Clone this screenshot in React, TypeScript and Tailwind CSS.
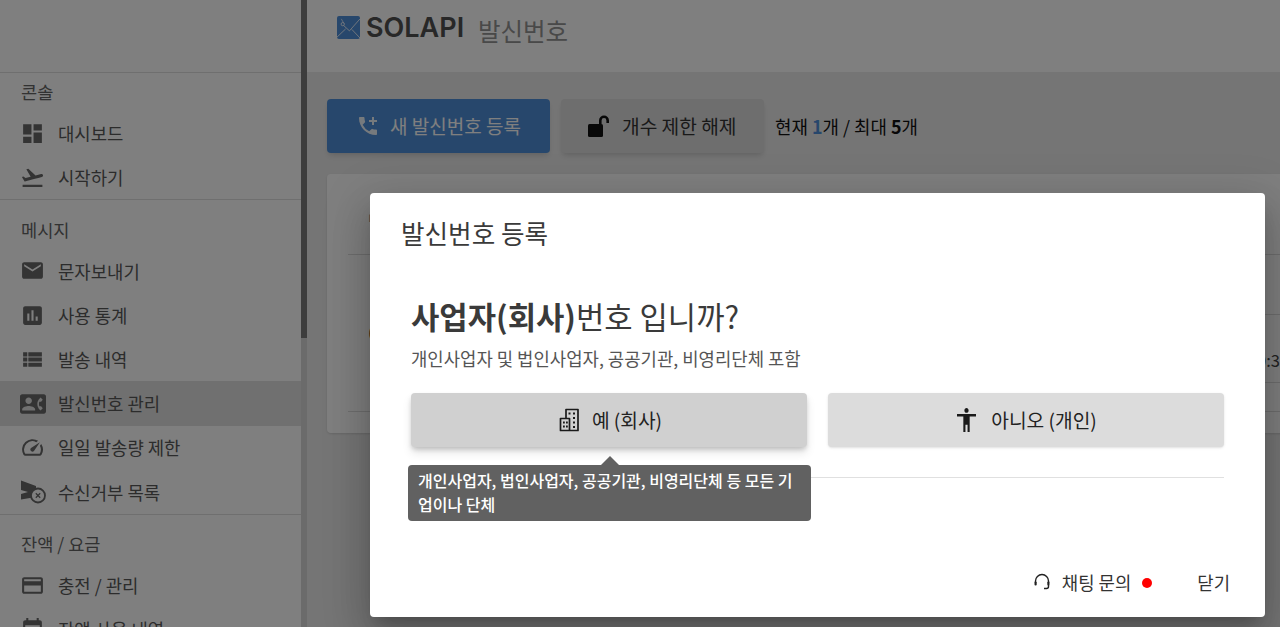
import React from "react";
import {
  MdDashboard,
  MdFlightTakeoff,
  MdEmail,
  MdAssessment,
  MdViewList,
  MdContactPhone,
  MdSpeed,
  MdOutlineCreditCard,
  MdEvent,
  MdAddIcCall,
} from "react-icons/md";

function BlockedIcon() {
  return (
    <svg viewBox="0 0 26 24" className="w-[26px] h-[24px]" fill="currentColor">
      <path d="M1 .5 16 6v11L1 19.500V14l7-2-7-2Z" />
      <circle cx="18" cy="15.500" r="7" fill="#fff" stroke="currentColor" strokeWidth="1.800" />
      <path d="m15.800 13.300 4.400 4.400m0-4.400-4.400 4.400" fill="none" stroke="currentColor" strokeWidth="1.300" />
    </svg>
  );
}

function Item({ icon, label, active }: { icon: React.ReactNode; label: string; active?: boolean }) {
  return (
    <div className={`flex items-center h-[44.2px] ${active ? "bg-[#e0e0e0]" : ""}`}>
      <div className="w-[58px] pl-[20px] flex items-center text-[#686868]">{icon}</div>
      <span className="text-[17.8px] text-[#585858]">{label}</span>
    </div>
  );
}

function Section({ label, first, children }: { label: string; first?: boolean; children: React.ReactNode }) {
  return (
    <div className={`border-b border-[#dedede] ${first ? "" : "pt-[10.5px]"}`}>
      <div className="h-[38px] pl-[21px] flex items-center text-[17.6px] text-[#656565]">{label}</div>
      {children}
    </div>
  );
}

function Sidebar() {
  return (
    <aside className="w-[307px] h-full flex shrink-0 bg-white overflow-hidden">
      <div className="w-[301px] flex flex-col">
        <div className="h-[73px] shrink-0 border-b border-[#dedede]" />
        <Section label="콘솔" first>
          <Item icon={<MdDashboard size={25} />} label="대시보드" />
          <Item icon={<MdFlightTakeoff size={25} />} label="시작하기" />
        </Section>
        <Section label="메시지">
          <Item icon={<MdEmail size={25} />} label="문자보내기" />
          <Item icon={<MdAssessment size={25} />} label="사용 통계" />
          <Item icon={<MdViewList size={25} />} label="발송 내역" />
          <Item icon={<MdContactPhone size={26} />} label="발신번호 관리" active />
          <Item icon={<MdSpeed size={25} />} label="일일 발송량 제한" />
          <Item icon={<BlockedIcon />} label="수신거부 목록" />
        </Section>
        <Section label="잔액 / 요금">
          <Item icon={<MdOutlineCreditCard size={25} />} label="충전 / 관리" />
          <Item icon={<MdEvent size={25} />} label="잔액 사용 내역" />
        </Section>
      </div>
      <div className="w-[6px] bg-[#d6d6d6]">
        <div className="h-[338px] bg-[#7a7a7a]" />
      </div>
    </aside>
  );
}

function LogoMark() {
  return (
    <svg viewBox="0 0 24 24" className="w-[23px] h-[23px]">
      <rect width="24" height="24" rx="2" fill="#4f8fd8" />
      <path
        d="M7 10 13 15.500 24 3M0 22 9 13.500M24 23 15.500 14"
        fill="none"
        stroke="#e6eefa"
        strokeWidth="1"
      />
      <circle cx="6" cy="8.500" r="1.700" fill="none" stroke="#e6eefa" strokeWidth="1" />
      <path d="M4.500 3 7 7.500" fill="none" stroke="#e6eefa" strokeWidth=".8" />
    </svg>
  );
}

function Main() {
  return (
    <main className="flex-1 min-w-0 h-full bg-[#ebebeb] flex flex-col overflow-hidden">
      <header className="h-[72px] shrink-0 bg-white pl-[30px] pt-[16px] flex items-start">
        <LogoMark />
        <span className="ml-[6px] w-[100px] text-[27px] leading-[24px] font-['Inter',sans-serif] font-semibold text-[#505050] tracking-[0px] whitespace-nowrap">
          SOLAPI
        </span>
        <span className="ml-[12px] mt-[1px] text-[24.5px] leading-[28px] text-[#929292]">발신번호</span>
      </header>
      <div className="pl-[20px] pt-[27px] flex items-center">
        <button className="w-[223px] h-[54px] rounded-[4px] bg-[#4f8fd8] flex items-center pl-[29px] text-white shadow-md">
          <MdAddIcCall size={24} className="opacity-90" />
          <span className="ml-[10px] text-[19px] whitespace-nowrap">새 발신번호 등록</span>
        </button>
        <button className="ml-[11px] w-[203px] h-[54px] rounded-[4px] bg-[#dcdcdc] flex items-center pl-[26px] shadow-md text-[#111]">
          <svg viewBox="0 0 24 24" className="w-[24px] h-[24px]" fill="currentColor">
            <rect x="1" y="10" width="15" height="13" rx="1.500" />
            <path d="M12 10V6.500a5 5 0 0 1 10 0V9h-2.600V6.500a2.400 2.400 0 0 0-4.800 0V10Z" />
          </svg>
          <span className="ml-[11px] text-[19.2px] text-[#333] whitespace-nowrap">개수 제한 해제</span>
        </button>
        <span className="ml-[11px] text-[17.9px] text-[#111]">
          현재 <b className="text-[#4f8fd8] font-bold">1</b>개 / 최대 <b className="font-bold">5</b>개
        </span>
      </div>
      <section className="ml-[20px] mt-[21px] w-[1100px] h-[259px] bg-white rounded-[4px] shadow-sm flex flex-col px-[21px]">
        <div className="h-[81px] shrink-0 border-b border-[#dcdcdc] pl-[20px] pt-[33px] text-[15px] leading-[26px] text-[#888]">
          번
        </div>
        <div className="h-[157px] shrink-0 border-b border-[#dcdcdc] flex">
          <div className="w-[909px] pl-[20.500px] pt-[62px] text-[20px] leading-[32px] text-[#111]">0</div>
          <div className="w-[100px] flex flex-col">
            <div className="h-[60px] border-b border-[#dcdcdc]" />
            <div className="h-[68px] border-b border-[#dcdcdc] flex items-center pt-[24px] text-[16.5px] text-[#444] whitespace-nowrap">
              0:3
            </div>
          </div>
        </div>
      </section>
    </main>
  );
}

function BuildingIcon() {
  return (
    <svg viewBox="0 0 20 24" className="w-[20px] h-[24px]" fill="none" stroke="#1a1a1a" strokeWidth="1.700">
      <path d="M7 10.500V1.500h12v21H1.500v-12H10.500v12" strokeLinejoin="round" />
      <g fill="#1a1a1a" stroke="none">
        <rect x="9.500" y="4.500" width="2" height="2" />
        <rect x="14" y="4.500" width="2" height="2" />
        <rect x="14" y="9" width="2" height="2" />
        <rect x="14" y="13.500" width="2" height="2" />
        <rect x="14" y="18" width="2" height="2" />
        <rect x="4" y="13.500" width="1.800" height="2" />
        <rect x="7" y="13.500" width="1.800" height="2" />
        <rect x="4" y="17.500" width="1.800" height="2" />
        <rect x="7" y="17.500" width="1.800" height="2" />
      </g>
    </svg>
  );
}

function PersonIcon() {
  return (
    <svg viewBox="3 2 18 20" className="w-[19px] h-[24px]" preserveAspectRatio="none" fill="#1a1a1a">
      <path d="M12 2c1.100 0 2 .9 2 2s-.9 2-2 2-2-.9-2-2 .9-2 2-2zm9 7h-6v13h-2v-6h-2v6H9V9H3V7h18v2z" />
    </svg>
  );
}

function HeadsetIcon() {
  return (
    <svg viewBox="0 0 18 18" className="w-[18px] h-[18px]" fill="none" stroke="#222" strokeWidth="1.400">
      <path d="M2.500 9.500V8a6.500 6.500 0 0 1 13 0v1.500" />
      <rect x="1.500" y="8.500" width="2.200" height="4" rx="1" fill="#222" stroke="none" />
      <rect x="14.300" y="8.500" width="2.200" height="4" rx="1" fill="#222" stroke="none" />
      <path d="M15.500 12v1.500a2 2 0 0 1-2 2H11" />
    </svg>
  );
}

function Dialog() {
  return (
    <div className="h-full bg-white rounded-[4px] flex flex-col shadow-[0_11px_15px_-7px_rgba(0,0,0,0.2),0_24px_38px_3px_rgba(0,0,0,0.14),0_9px_46px_8px_rgba(0,0,0,0.12)]">
      <h2 className="pl-[31px] pt-[23px] text-[25.6px] leading-[34px] text-[#3a3a3a]">발신번호 등록</h2>
      <div className="px-[41px] mt-[44px]">
        <p className="text-[30.8px] leading-[44px] text-[#3a3a3a]">
          <b className="font-bold">사업자(회사)</b>번호 입니까?
        </p>
        <p className="mt-[8px] text-[17.8px] leading-[24px] text-[#555]">
          개인사업자 및 법인사업자, 공공기관, 비영리단체 포함
        </p>
        <div className="mt-[23px] grid grid-cols-2 gap-[21px]">
          <div className="relative">
            <button className="w-full h-[54px] rounded-[4px] bg-[#d0d0d0] flex items-center justify-center pl-[3px] shadow-[0_3px_5px_-1px_rgba(0,0,0,0.2),0_6px_10px_0_rgba(0,0,0,0.1)]">
              <BuildingIcon />
              <span className="ml-[13px] text-[19.2px] text-[#222]">예 (회사)</span>
            </button>
            <div className="absolute z-10 left-[-3px] top-[72px] w-[403px] h-[56px] rounded-[4px] bg-[#616161] text-white text-[16px] leading-[24px] font-medium pl-[10px] pr-[8px] pt-[3px]">
              <span className="absolute left-[193px] top-[-9px] w-0 h-0 border-x-[9px] border-x-transparent border-b-[9px] border-b-[#616161]" />
              개인사업자, 법인사업자, 공공기관, 비영리단체 등 모든 기업이나 단체
            </div>
          </div>
          <button className="h-[54px] rounded-[4px] bg-[#dcdcdc] flex items-center justify-center pl-[2px] shadow-sm">
            <PersonIcon />
            <span className="ml-[15px] text-[19.2px] text-[#222]">아니오 (개인)</span>
          </button>
        </div>
        <div className="mt-[30px] border-t border-[#e0e0e0]" />
      </div>
      <footer className="mt-auto pb-[23px] pr-[35px] flex items-center justify-end text-[17.8px] leading-[24px] text-[#333]">
        <HeadsetIcon />
        <span className="ml-[11px]">채팅 문의</span>
        <span className="ml-[11px] mt-[2px] w-[10px] h-[10px] rounded-full bg-[#ff0000]" />
        <span className="ml-[45px]">닫기</span>
      </footer>
    </div>
  );
}

export default function App() {
  return (
    <div className="relative w-[1280px] h-[627px] overflow-hidden flex font-['Noto_Sans_CJK_KR','Noto_Sans',sans-serif]">
      <Sidebar />
      <Main />
      <div className="absolute inset-0 bg-black/50 pl-[370px] pr-[15px] pt-[193px] pb-[10px]">
        <Dialog />
      </div>
    </div>
  );
}
